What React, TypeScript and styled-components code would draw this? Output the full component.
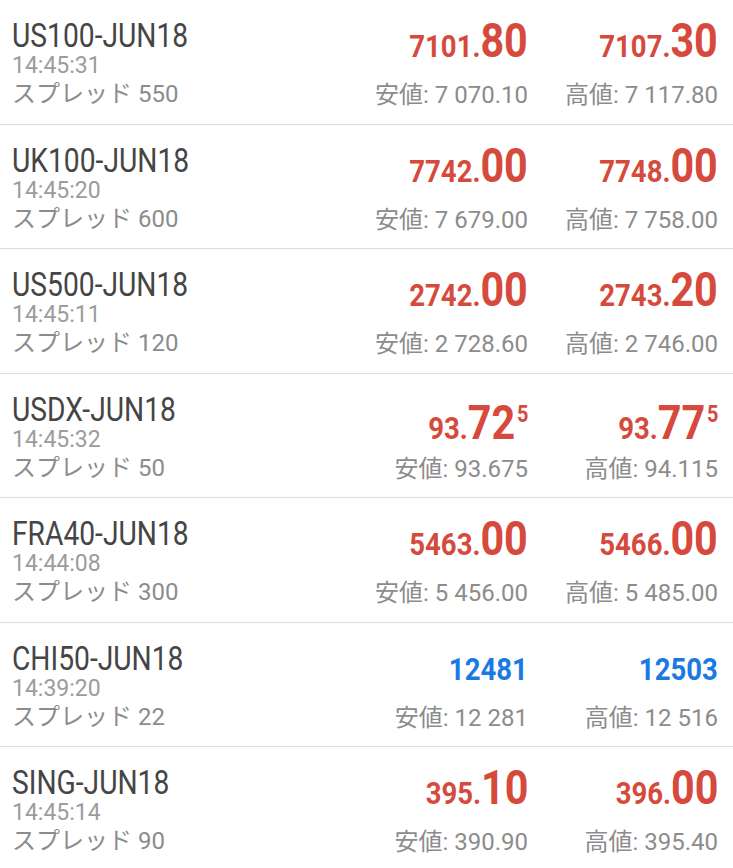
import React from 'react';
import styled, { createGlobalStyle } from 'styled-components';

const GlobalStyle = createGlobalStyle`
  html, body {
    margin: 0;
    padding: 0;
    background: #fff;
  }
  body {
    font-family: 'Roboto', 'Noto Sans CJK JP', sans-serif;
    overflow: hidden;
  }
`;

const List = styled.div`
  width: 733px;
  height: 868px;
  overflow: hidden;
  background: #fff;
`;

const Row = styled.div`
  display: flex;
  height: 124.5px;
  box-sizing: border-box;
  border-bottom: 1px solid #dcdcdc;
  padding: 0 15px 0 12px;
`;

const Info = styled.div`
  flex: 1;
  padding-top: 17px;
`;

const Symbol = styled.div`
  font-size: 34px;
  line-height: 36px;
  color: #454545;
  white-space: nowrap;

  span {
    display: inline-block;
    transform: scaleX(0.83);
    transform-origin: left center;
  }
`;

const Time = styled.div`
  font-size: 23px;
  line-height: 26px;
  color: #9c9c9c;
`;

const Spread = styled.div`
  margin-top: 1px;
  font-size: 24px;
  line-height: 28px;
  color: #8c8c8c;
  white-space: nowrap;
`;

const Quote = styled.div`
  width: 190px;
  text-align: right;
  padding-top: 17px;
`;

const Price = styled.div<{ $tone: 'red' | 'blue' }>`
  font-size: 48px;
  line-height: 48px;
  height: 48px;
  font-weight: 700;
  color: ${(p) => (p.$tone === 'red' ? '#d64a3d' : '#1b79e2')};
  white-space: nowrap;

  > span {
    display: inline-block;
    transform: scaleX(0.86);
    transform-origin: right center;
  }
`;

const Small = styled.span`
  font-size: 32px;
`;

const Big = styled.span`
  font-size: 48px;
`;

const Sup = styled.span`
  font-size: 23px;
  vertical-align: 17px;
  margin-left: 2px;
`;

const Range = styled.div`
  margin-top: 16px;
  font-size: 24px;
  line-height: 28px;
  color: #8c8c8c;
  white-space: nowrap;
`;

type Side = { head?: string; tail?: string; sup?: string; whole?: string; range: string };

type Item = {
  symbol: string;
  time: string;
  spread: number;
  tone: 'red' | 'blue';
  bid: Side;
  ask: Side;
};

const ITEMS: Item[] = [
  {
    symbol: 'US100-JUN18',
    time: '14:45:31',
    spread: 550,
    tone: 'red',
    bid: { head: '7101.', tail: '80', range: '7 070.10' },
    ask: { head: '7107.', tail: '30', range: '7 117.80' },
  },
  {
    symbol: 'UK100-JUN18',
    time: '14:45:20',
    spread: 600,
    tone: 'red',
    bid: { head: '7742.', tail: '00', range: '7 679.00' },
    ask: { head: '7748.', tail: '00', range: '7 758.00' },
  },
  {
    symbol: 'US500-JUN18',
    time: '14:45:11',
    spread: 120,
    tone: 'red',
    bid: { head: '2742.', tail: '00', range: '2 728.60' },
    ask: { head: '2743.', tail: '20', range: '2 746.00' },
  },
  {
    symbol: 'USDX-JUN18',
    time: '14:45:32',
    spread: 50,
    tone: 'red',
    bid: { head: '93.', tail: '72', sup: '5', range: '93.675' },
    ask: { head: '93.', tail: '77', sup: '5', range: '94.115' },
  },
  {
    symbol: 'FRA40-JUN18',
    time: '14:44:08',
    spread: 300,
    tone: 'red',
    bid: { head: '5463.', tail: '00', range: '5 456.00' },
    ask: { head: '5466.', tail: '00', range: '5 485.00' },
  },
  {
    symbol: 'CHI50-JUN18',
    time: '14:39:20',
    spread: 22,
    tone: 'blue',
    bid: { whole: '12481', range: '12 281' },
    ask: { whole: '12503', range: '12 516' },
  },
  {
    symbol: 'SING-JUN18',
    time: '14:45:14',
    spread: 90,
    tone: 'red',
    bid: { head: '395.', tail: '10', range: '390.90' },
    ask: { head: '396.', tail: '00', range: '395.40' },
  },
];

const QuoteCell: React.FC<{ side: Side; tone: 'red' | 'blue'; label: string }> = ({
  side,
  tone,
  label,
}) => (
  <Quote>
    <Price $tone={tone}>
      <span>
        {side.whole ? (
          <Small>{side.whole}</Small>
        ) : (
          <>
            <Small>{side.head}</Small>
            <Big>{side.tail}</Big>
            {side.sup && <Sup>{side.sup}</Sup>}
          </>
        )}
      </span>
    </Price>
    <Range>
      {label}: {side.range}
    </Range>
  </Quote>
);

const App: React.FC = () => {
  return (
    <>
      <GlobalStyle />
      <List>
        {ITEMS.map((item) => (
          <Row key={item.symbol}>
            <Info>
              <Symbol>
                <span>{item.symbol}</span>
              </Symbol>
              <Time>{item.time}</Time>
              <Spread>スプレッド {item.spread}</Spread>
            </Info>
            <QuoteCell side={item.bid} tone={item.tone} label="安値" />
            <QuoteCell side={item.ask} tone={item.tone} label="高値" />
          </Row>
        ))}
      </List>
    </>
  );
};

export default App;
